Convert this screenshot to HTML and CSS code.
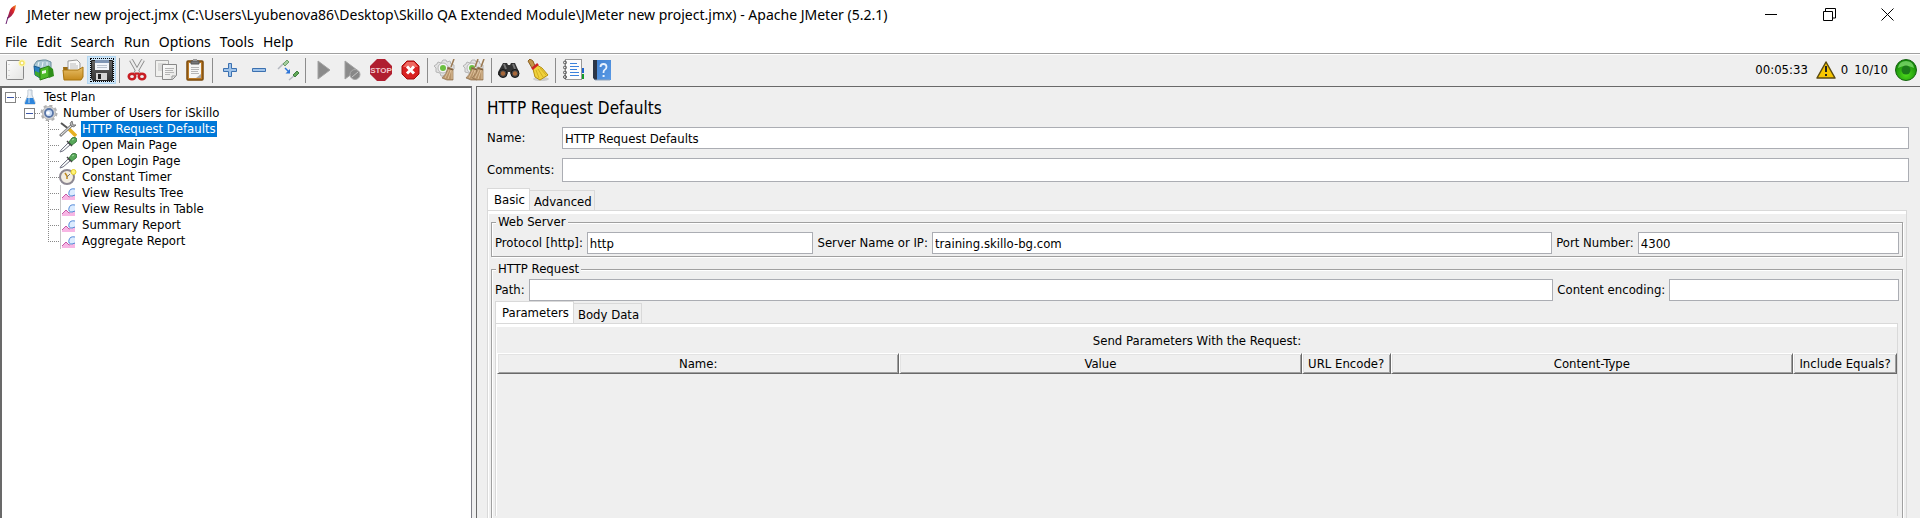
FILE: index.html
```html
<!DOCTYPE html>
<html lang="en">
<head>
<meta charset="utf-8">
<title>JMeter new project.jmx - Apache JMeter (5.2.1)</title>
<link rel="stylesheet" href="styles.css">
</head>
<body>
<svg class="defs" aria-hidden="true">
  <defs>
    <linearGradient id="steel" x1="0" y1="0" x2="0" y2="1"><stop offset="0" stop-color="#666"/><stop offset="1" stop-color="#333"/></linearGradient>
    <linearGradient id="paper" x1="0" y1="0" x2="1" y2="1"><stop offset="0" stop-color="#fdfdfd"/><stop offset="1" stop-color="#e4e4e2"/></linearGradient>
    <linearGradient id="gold" x1="0" y1="0" x2="0" y2="1"><stop offset="0" stop-color="#e9c06a"/><stop offset="1" stop-color="#c58a1c"/></linearGradient>
    <linearGradient id="book" x1="0" y1="0" x2="1" y2="1"><stop offset="0" stop-color="#3f80d0"/><stop offset="1" stop-color="#5a9ae6"/></linearGradient>
    <radialGradient id="lamp" cx=".5" cy=".7" r=".6"><stop offset="0" stop-color="#4fdc1c"/><stop offset="1" stop-color="#138a08"/></radialGradient>
    <linearGradient id="feather" x1="1" y1="0" x2="0" y2="1"><stop offset="0" stop-color="#f08a1c"/><stop offset=".4" stop-color="#d8232a"/><stop offset="1" stop-color="#6a2070"/></linearGradient>
    <symbol id="report" viewBox="0 0 16 16">
      <path d="M.5 0V16" stroke="#c8c8c8"/><path d="M2 13 6 9l3 3 6-2v5H2z" fill="#f7b6e4"/><path d="M2 13 6 9l3 3 6-2" fill="none" stroke="#c45aa6"/><path d="M8 10 9 5q3-3 6-1v6l-4 2z" fill="#dcecff"/><path d="M15 4q-5-1-6 3t3 4l3-1" fill="none" stroke="#5a8ed8"/>
    </symbol>
    <symbol id="dropper" viewBox="0 0 18 16">
      <path d="M1 15 2 13 9 6l2 2-7 6z" fill="#e8eeee" stroke="#778"/><path d="M4 13 10 7" stroke="#fff"/><path d="M8 4l5 5" stroke="#444" stroke-width="1.500"/><path d="M10 5 13 1q2-1.500 4 0t0 4l-4 3z" fill="#58a85a" stroke="#3f7d44"/><path d="M13 3l2-1" stroke="#a6dca6"/>
    </symbol>
    <symbol id="gearbroom" viewBox="0 0 22 22">
      <path d="M9 1h3l1 2 3-1 1 3 3 1v4l-3 3-2 4H7l-1-3-4-1V9L0 7l3-2 1-2 3 1z" fill="#e2e2e2" stroke="#b5b5b5"/><circle cx="9" cy="9" r="5" fill="#f4f4f4" stroke="#b7b7b7"/><circle cx="9" cy="9" r="3" fill="#6cc040"/>
    </symbol>
    <symbol id="broomhead" viewBox="0 0 14 22">
      <path d="M13 0 10 8" stroke="#9c7a52" stroke-width="1.500"/><path d="M7 8l5 2v11H6L1 19q5-4 6-11z" fill="#b8946a" stroke="#8d6f4c" stroke-width=".7"/><path d="M8 11 4 19M10 11 7 20M11 11v9" stroke="#dcc09a"/><path d="M6.500 9l5.500 2" stroke="#7b5c3b"/>
    </symbol>
  </defs>
</svg>

<header class="titlebar">
  <svg class="app-icon" viewBox="0 0 12 20"><path d="M11 0Q5 2 4 8L2 14 4 13Q10 9 11 0z" fill="url(#feather)"/><path d="M3 12 1 19" stroke="#6a2070"/></svg>
  <h1 class="app-title">JMeter new project.jmx (C:\Users\Lyubenova86\Desktop\Skillo QA Extended Module\JMeter new project.jmx) - Apache JMeter (5.2.1)</h1>
  <div class="window-controls">
    <button class="wc" aria-label="Minimize"><svg viewBox="0 0 13 13"><path d="M0 6.500h12" stroke="#000"/></svg></button>
    <button class="wc" aria-label="Restore"><svg viewBox="0 0 13 13"><path d="M.5 3.500h9v9h-9zM2.500 3V.500h10v9.500H10" fill="none" stroke="#000"/></svg></button>
    <button class="wc" aria-label="Close"><svg viewBox="0 0 13 13"><path d="M.5.500l12 12M12.500.500l-12 12" stroke="#000"/></svg></button>
  </div>
</header>

<nav class="menubar" aria-label="Main menu">
  <button>File</button><button>Edit</button><button>Search</button><button>Run</button><button>Options</button><button>Tools</button><button>Help</button>
</nav>

<div class="toolbar" role="toolbar">
  <button class="tool" aria-label="New"><svg viewBox="0 0 22 22"><rect x="2.500" y="1.500" width="17" height="19" rx="1" fill="url(#paper)" stroke="#888"/><path d="M5 5v1M5 11v1M5 16v1" stroke="#bbb"/><circle cx="18" cy="4" r="3.500" fill="#fff6a0"/><circle cx="18" cy="4" r="2" fill="#fffdf0" stroke="#ecd84a"/></svg></button>
  <button class="tool" aria-label="Templates"><svg viewBox="0 0 22 22"><path d="M1 6 4 2l6-1 3 0 5 2v8H3z" fill="#a9c6d2" stroke="#6a8c9c"/><path d="M5 7 6 3M9 8l1-5M14 6V3" stroke="#eef6fa"/><path d="M1 7l6 2v10l-5-3z" fill="#2a7fc0" stroke="#175c92"/><path d="M2 12l5 2v5l-5-3z" fill="#3da62c"/><path d="M7 10 16 7v11l-9 3z" fill="#4dbb28" stroke="#2a7d14"/><path d="M16 7l4 3 1 7-5 2z" fill="#2e8f1a"/><path d="M9 12 13 11v3l-4 1z" fill="#e9f7df"/></svg></button>
  <button class="tool" aria-label="Open"><svg viewBox="0 0 22 22"><path d="M1 8h5l1 2h13v10H2z" fill="#9c6b12"/><path d="M6 2 15 1l3 3v9H6z" fill="#fafafa" stroke="#999"/><path d="M8 5h6M8 7h8M8 9h8" stroke="#bbb"/><path d="M1 11h15l5-3v10l-2 3H2z" fill="url(#gold)" stroke="#a8740f"/></svg></button>
  <button class="tool focused" aria-label="Save"><svg viewBox="0 0 22 22"><path d="M.5 1.500h21v20H2l-1.500-2z" fill="url(#steel)" stroke="#222"/><path d="M4 1h14v10H4z" fill="#f2f5fa"/><path d="M4 1h14v3H4z" fill="#7f95b4"/><path d="M6 6.500h10M6 8.500h10" stroke="#b8c0cc"/><path d="M5 14h11v7H5z" fill="#d4d4d4"/><path d="M7 15h3v5H7z" fill="#222"/></svg></button>
  <span class="sep"></span>
  <button class="tool" aria-label="Cut"><svg viewBox="0 0 22 22"><path d="M5 1 13 15M17 1 9 15" stroke="#888" stroke-width="4"/><path d="M5 1 13 15M17 1 9 15" stroke="#ececec" stroke-width="2.400"/><g fill="none" stroke="#c81e24" stroke-width="2.600"><ellipse cx="6" cy="17.500" rx="3.200" ry="2.800"/><ellipse cx="16" cy="17.500" rx="3.200" ry="2.800"/></g><path d="M9 14.500h4" stroke="#c81e24" stroke-width="2"/></svg></button>
  <button class="tool" aria-label="Copy"><svg viewBox="0 0 22 22"><path d="M.5 1.500h13v16H.500z" fill="#f0f0ee" stroke="#aaa"/><path d="M3 5h8M3 7h6M3 9h5M3 11h5" stroke="#c2c2c2"/><path d="M7.500 5.500h14v11l-4 4h-10z" fill="url(#paper)" stroke="#888"/><path d="M17 21v-4h4" fill="none" stroke="#999"/><path d="M10 9.500h9M10 11.500h8M10 13.500h9M10 15.500h5" stroke="#b5b5b5"/></svg></button>
  <button class="tool" aria-label="Paste"><svg viewBox="0 0 22 22"><rect x="3" y="2" width="16" height="19" rx="1" fill="#bb7a26" stroke="#7c4b0c" stroke-width="1.500"/><path d="M5 4h12v15H5z" fill="#f5f5f3"/><path d="M7 2h8v3H7z" fill="#777" stroke="#555"/><path d="M9 0h4v2H9z" fill="#999"/><path d="M7 8.500h8M7 10.500h8M7 12.500h7M7 14.500h8" stroke="#b5b5b5"/><path d="M12 19l5-4v4z" fill="#aaa"/></svg></button>
  <span class="sep"></span>
  <button class="tool" aria-label="Expand all"><svg viewBox="0 0 22 22"><path d="M9.500 4.500h3v5h5v3h-5v5h-3v-5h-5v-3h5z" fill="#9fc3ea" stroke="#3c71b0"/></svg></button>
  <button class="tool" aria-label="Collapse all"><svg viewBox="0 0 22 22"><path d="M4.500 9.500h13v3h-13z" fill="#9fc3ea" stroke="#3c71b0"/></svg></button>
  <button class="tool" aria-label="Toggle"><svg viewBox="0 0 22 22"><path d="M1 10 7 4M12 21l6-5" stroke="#b4b8c0" stroke-width="1.500"/><path d="M6 5l4-4 2 2-4 4z" fill="#a3cb9d" stroke="#6da06a"/><path d="M16 16l4-4 2 2-4 4z" fill="#62a858" stroke="#3f7d40"/><path d="M8 9l4 4" stroke="#2c74d8" stroke-width="1.500"/><path d="M13 10v4.500H8.500z" fill="#2c74d8"/></svg></button>
  <span class="sep"></span>
  <button class="tool" aria-label="Start"><svg viewBox="0 0 22 22"><path d="M6 2 18 11 6 20z" fill="#8b8b8b" stroke="#a2a2a2"/></svg></button>
  <button class="tool" aria-label="Start no pauses"><svg viewBox="0 0 22 22"><path d="M4 2 16 11 4 20z" fill="#8b8b8b" stroke="#a2a2a2"/><circle cx="14" cy="15.500" r="5" fill="#888" stroke="#aaa"/><path d="M11 18l6-5" stroke="#c6c6c6"/></svg></button>
  <button class="tool" aria-label="Stop"><svg viewBox="0 0 22 22"><path d="M7 0h8l7 7v8l-7 7H7l-7-7V7z" fill="#b01f30"/><text class="stop-text" x="11" y="14" text-anchor="middle" fill="#f2c8cc">STOP</text></svg></button>
  <button class="tool" aria-label="Shutdown"><svg viewBox="0 0 22 22"><path d="M8 2h7l5 5v8l-5 5H8l-5-5V7z" fill="#d92222" stroke="#a00c0c"/><path d="M8 3h7l4 5H4z" fill="#ee6a62"/><path d="M8 7.500l7 7M15 7.500l-7 7" stroke="#fff" stroke-width="3"/></svg></button>
  <span class="sep"></span>
  <button class="tool" aria-label="Clear"><svg viewBox="0 0 22 22"><use href="#gearbroom" width="22" height="22"/><use href="#broomhead" x="7" width="14" height="22"/></svg></button>
  <button class="tool" aria-label="Clear all"><svg viewBox="0 0 22 22"><use href="#gearbroom" width="22" height="22"/><use href="#broomhead" x="2" width="14" height="22"/><use href="#broomhead" x="8" width="14" height="22"/></svg></button>
  <span class="sep"></span>
  <button class="tool" aria-label="Search"><svg viewBox="0 0 22 22"><path d="M5 4h4l1 2h2l1-2h4l4 9v3l-4 2-4-2-1-3h-2l-1 3-4 2-5-2v-3z" fill="#333"/><path d="M6 5l2 5M15 5l2 5" stroke="#777" stroke-width="2"/><circle cx="5" cy="14.500" r="4" fill="#444" stroke="#151515"/><circle cx="17" cy="14.500" r="4" fill="#444" stroke="#151515"/><circle cx="5" cy="14.500" r="2.200" fill="#a8683a"/><circle cx="17" cy="14.500" r="2.200" fill="#a8683a"/></svg></button>
  <button class="tool" aria-label="Reset search"><svg viewBox="0 0 22 22"><ellipse cx="14" cy="20" rx="8" ry="2" fill="#ccc"/><path d="M1 2 3 0l3 2 2 5-3 2z" fill="#c39449" stroke="#8a6020"/><path d="M10 6l5 3 6 7-8 5-5-3-2-8z" fill="#f0d23c" stroke="#b48d10"/><path d="M9 11l3 8M11 10l5 8M13 9l6 7" stroke="#d3ae22"/><path d="M5 10 11 5" stroke="#cf2424" stroke-width="2.500"/></svg></button>
  <span class="sep"></span>
  <button class="tool" aria-label="Function helper"><svg viewBox="0 0 22 22"><path d="M19 9h3v5h-3z" fill="#1b62d0"/><path d="M19 15h3v5h-3z" fill="#149a28"/><rect x="3.500" y=".5" width="16" height="20" fill="#fcfcfc" stroke="#999"/><path d="M8 4.500h7M8 7.500h9M8 10.500h7M8 13.500h9M8 16.500h9" stroke="#3b82dc"/><g fill="none" stroke="#555"><circle cx="3" cy="3.500" r="1.500"/><circle cx="3" cy="8.500" r="1.500"/><circle cx="3" cy="13.500" r="1.500"/><circle cx="3" cy="18" r="1.500"/></g></svg></button>
  <button class="tool" aria-label="Help"><svg viewBox="0 0 22 22"><path d="M3 1h17v20H4l-1-1z" fill="url(#book)"/><path d="M2 1h4v20H4l-2-2z" fill="#2b3648"/><path d="M4 21h15" stroke="#93a5bb"/><path d="M9.500 8q0-3 3-3t3 3q0 2-2 3-1 .5-1 3" fill="none" stroke="#e8f2ff" stroke-width="1.800"/><path d="M11.600 16h2v2h-2z" fill="#e8f2ff"/></svg></button>
  <div class="status">
    <span class="elapsed">00:05:33</span>
    <svg class="warn" viewBox="0 0 20 18"><path d="M10 1 19 17H1z" fill="#f7c600" stroke="#5b4a10" stroke-width="1.500" stroke-linejoin="round"/><path d="M10 5v6M10 13v2" stroke="#222" stroke-width="2"/></svg>
    <span class="errors">0</span>
    <span class="threads">10/10</span>
    <svg class="lamp" viewBox="0 0 22 22"><circle cx="11" cy="11" r="10.500" fill="url(#lamp)" stroke="#176412"/><path d="M3 9q1-7 8-7t8 7q-8-4-16 0z" fill="#8adf7a" opacity=".7"/><circle cx="11" cy="11" r="4.500" fill="#1c7a1a"/></svg>
  </div>
</div>

<main class="workspace">
  <nav class="tree-pane" aria-label="Test plan tree">
    <ul class="tree">
      <li>
        <div class="node"><button class="toggle" aria-label="Collapse Test Plan"></button><span class="link"></span><svg class="ico" viewBox="0 0 18 16"><path d="M7 1h4v5l3 7v2H4v-2l3-7z" fill="#e4ebf2" stroke="#b4c0cc"/><path d="M6 9h6l2 5v1H4v-1z" fill="#2f86dc"/><path d="M8 1v13" stroke="#fff" opacity=".7"/></svg><span class="text">Test Plan</span></div>
        <ul class="branch">
          <li>
            <div class="node"><button class="toggle" aria-label="Collapse Number of Users for iSkillo"></button><span class="link"></span><svg class="ico" viewBox="0 0 18 16"><circle cx="9" cy="8" r="7" fill="none" stroke="#b0b0b0" stroke-width="3" stroke-dasharray="3 2.500"/><circle cx="9" cy="8" r="6.500" fill="#d4d4d4" stroke="#b8b8b8"/><circle cx="9" cy="8" r="4" fill="#c5d9f4" stroke="#5875a6" stroke-width="1.800"/><circle cx="8" cy="8" r="1.800" fill="#fff"/></svg><span class="text">Number of Users for iSkillo</span></div>
            <ul class="leaves">
              <li class="node"><span class="guide"></span><svg class="ico" viewBox="0 0 18 16"><path d="M2 2 11 9" stroke="#555" stroke-width="2"/><path d="M10 8l7 7" stroke="#e6b020" stroke-width="3.500"/><path d="M1 15 13 4" stroke="#888" stroke-width="3"/><path d="M2 14 12 5" stroke="#eee"/><path d="M13 0q-3 2-1 5 3 2 5-1l-3 0z" fill="#bbb" stroke="#777"/></svg><span class="text selected">HTTP Request Defaults</span></li>
              <li class="node"><span class="guide"></span><svg class="ico"><use href="#dropper"/></svg><span class="text">Open Main Page</span></li>
              <li class="node"><span class="guide"></span><svg class="ico"><use href="#dropper"/></svg><span class="text">Open Login Page</span></li>
              <li class="node"><span class="guide"></span><svg class="ico" viewBox="0 0 18 16"><circle cx="8" cy="8" r="7" fill="#f3eee2" stroke="#8d8892" stroke-width="2"/><path d="M8 10V7L6 4" fill="none" stroke="#c08a20" stroke-width="1.500"/><path d="M8 8l3-3" stroke="#777"/><circle cx="14.500" cy="3" r="2.500" fill="#fff27a" stroke="#e2cc28"/></svg><span class="text">Constant Timer</span></li>
              <li class="node"><span class="guide"></span><svg class="ico"><use href="#report"/></svg><span class="text">View Results Tree</span></li>
              <li class="node"><span class="guide"></span><svg class="ico"><use href="#report"/></svg><span class="text">View Results in Table</span></li>
              <li class="node"><span class="guide"></span><svg class="ico"><use href="#report"/></svg><span class="text">Summary Report</span></li>
              <li class="node"><span class="guide"></span><svg class="ico"><use href="#report"/></svg><span class="text">Aggregate Report</span></li>
            </ul>
          </li>
        </ul>
      </li>
    </ul>
  </nav>

  <section class="editor">
    <h2 class="heading">HTTP Request Defaults</h2>
    <div class="field-row"><label for="name">Name:</label><input id="name" value="HTTP Request Defaults"></div>
    <div class="field-row comments"><label for="comments">Comments:</label><input id="comments"></div>

    <div class="tabs" role="tablist"><button class="tab active" role="tab" aria-selected="true">Basic</button><button class="tab" role="tab">Advanced</button></div>
    <div class="pane outer">
      <fieldset class="group">
        <legend>Web Server</legend>
        <div class="line">
          <label for="protocol">Protocol [http]:</label><input id="protocol" class="w-protocol" value="http">
          <label for="server">Server Name or IP:</label><input id="server" class="w-server" value="training.skillo-bg.com">
          <label for="port">Port Number:</label><input id="port" class="w-port" value="4300">
        </div>
      </fieldset>
      <fieldset class="group fill">
        <legend>HTTP Request</legend>
        <div class="line">
          <label for="path">Path:</label><input id="path" class="w-path">
          <label for="encoding">Content encoding:</label><input id="encoding" class="w-encoding">
        </div>
        <div class="tabs" role="tablist"><button class="tab active" role="tab" aria-selected="true">Parameters</button><button class="tab" role="tab">Body Data</button></div>
        <div class="pane inner">
          <table class="params">
            <caption>Send Parameters With the Request:</caption>
            <colgroup><col><col><col class="c-encode"><col><col class="c-equals"></colgroup>
            <thead><tr><th>Name:</th><th>Value</th><th>URL Encode?</th><th>Content-Type</th><th>Include Equals?</th></tr></thead>
          </table>
        </div>
      </fieldset>
    </div>
  </section>
</main>
</body>
</html>
```
FILE: styles.css
```css
* { box-sizing: border-box; }
body {
  margin: 0;
  height: 100vh;
  display: flex;
  flex-direction: column;
  overflow: hidden;
  background: #fff;
  color: #000;
  font: 13px/16px "DejaVu Sans Condensed", "DejaVu Sans", sans-serif;
}
button, input { font: inherit; color: inherit; }
button { background: none; border: 0; padding: 0; }
svg { display: block; flex: none; }
.defs { position: absolute; width: 0; height: 0; }

.titlebar { display: flex; align-items: center; height: 29px; padding: 0 4px 0 5px; flex: none; }
.app-icon { width: 12px; height: 20px; }
.app-title { margin: 0 0 0 10px; flex: 1; font: 14px/29px "Noto Sans", "Open Sans", sans-serif; white-space: nowrap; }
.window-controls { display: flex; }
.wc { width: 58px; height: 28px; display: flex; align-items: center; justify-content: center; }
.wc svg { width: 13px; height: 13px; }

.menubar { display: flex; gap: 9px; height: 25px; padding: 1px 5px 0; flex: none; border-bottom: 1px solid #a0a0a0; font: 14px/24px "Noto Sans", "Open Sans", sans-serif; }

.toolbar { display: flex; align-items: center; height: 32px; padding-bottom: 1px; flex: none; background: #efefef; border-top: 1px solid #fff; }
.tool { width: 29px; height: 28px; display: flex; align-items: center; justify-content: center; }
.tool svg { width: 22px; height: 22px; }
.tool.focused { background: #cce4f7; border: 1px solid #b4d8f2; }
.tool.focused svg { outline: 1px dotted #000; }
.stop-text { font: bold 8px "Liberation Sans", sans-serif; }
.sep { width: 6px; height: 25px; background: linear-gradient(#8c8c8c, #8c8c8c) center / 1px 100% no-repeat; }
.status { margin-left: auto; display: flex; align-items: center; padding-right: 3px; }
.warn { width: 20px; height: 18px; margin: 0 5px 0 8px; }
.threads { margin: 0 7px 0 6px; }
.lamp { width: 22px; height: 22px; }

.workspace { flex: 1; min-height: 0; display: flex; gap: 4px; background: #efefef; }
.tree-pane { width: 472px; flex: none; background: #fff; border: 1px solid #7f7f87; border-top: 2px solid #696969; border-left: 2px solid #696969; border-bottom: 0; }
.tree, .tree ul { list-style: none; margin: 0; padding: 0; }
.tree-pane .tree { padding: 1px 0 0 3px; }
.tree .branch { padding-left: 19px; }
.tree .leaves { padding-left: 24px; }
.node { display: flex; align-items: center; height: 16px; }
.toggle { width: 11px; height: 11px; flex: none; border: 1px solid #848484; background: linear-gradient(#3c57a8, #3c57a8) center / 7px 1px no-repeat; }
.link { width: 5px; height: 1px; background: repeating-linear-gradient(90deg, #888 0 1px, transparent 1px 2px); }
.guide {
  width: 11px; height: 16px; flex: none;
  background:
    repeating-linear-gradient(#888 0 1px, transparent 1px 2px) left top / 1px 16px no-repeat,
    repeating-linear-gradient(90deg, #888 0 1px, transparent 1px 2px) left 8px / 11px 1px no-repeat;
}
.leaves li:last-child .guide { background-size: 1px 8px, 11px 1px; }
.ico { width: 18px; height: 16px; margin-right: 4px; }
.text { padding: 0 1px; white-space: nowrap; }
.selected { background: #0078d7; color: #fff; }

.editor { flex: 1; min-width: 0; display: flex; flex-direction: column; border: solid #696969; border-width: 1px 0 0 1px; padding: 10px 11px 0 10px; }
.heading { margin: 0 0 8px; font-size: 17px; font-weight: 400; line-height: 22px; }
.field-row { display: flex; align-items: center; margin-bottom: 9px; }
.field-row label { width: 75px; flex: none; }
input { flex: 1; min-width: 0; height: 22px; margin: 0; padding: 0 2px; border: 1px solid #abadb3; border-radius: 0; background: #fff; }
.comments { margin-bottom: 6px; }
.comments input { height: 24px; }

.tabs { display: flex; align-items: flex-end; }
.tab { height: 20px; padding: 2px 2px 0 4px; border: 1px solid #d9d9d9; border-width: 1px 1px 0 0; white-space: nowrap; }
.tab.active { height: 22px; padding: 1px 4px 1px 6px; background: #fff; border-left-width: 1px; }
.pane { flex: 1; min-height: 0; display: flex; flex-direction: column; border: 1px solid #d9d9d9; border-bottom: 0; box-shadow: inset 1px 3px 0 #fff; }
.outer { margin-right: 2px; padding: 3px 3px 0; }
.inner { margin-right: 1px; padding: 3px 0 0 1px; }

.group { flex: none; min-width: 0; margin: 0 0 4px; padding: 2px 3px; border: 1px solid #a0a0a0; box-shadow: 1px 1px 0 #fff, inset 1px 1px 0 #fff; }
.group legend { margin-left: 1px; padding: 0 2px; background: #efefef; line-height: 16px; }
.fill { flex: 1; min-height: 0; display: flex; flex-direction: column; border-bottom: 0; margin: 0; }
.line { display: flex; align-items: center; gap: 4px; }
.w-protocol { flex: 223 0 0; }
.w-server { flex: 621 0 0; }
.w-port { flex: 258 0 0; }
.w-path { flex: 1029 0 0; }
.w-encoding { flex: 226 0 0; }

.params { width: 100%; table-layout: fixed; border-collapse: separate; border-spacing: 0; }
.params caption { height: 26px; line-height: 28px; }
.params th { height: 21px; padding: 0; font-weight: 400; line-height: 17px; border: 1px solid; border-color: #fff #696969 #696969 #fff; box-shadow: inset 1px 1px 0 #e3e3e3, inset -1px -1px 0 #a0a0a0; }
.c-encode { width: 89px; }
.c-equals { width: 104px; }
```
